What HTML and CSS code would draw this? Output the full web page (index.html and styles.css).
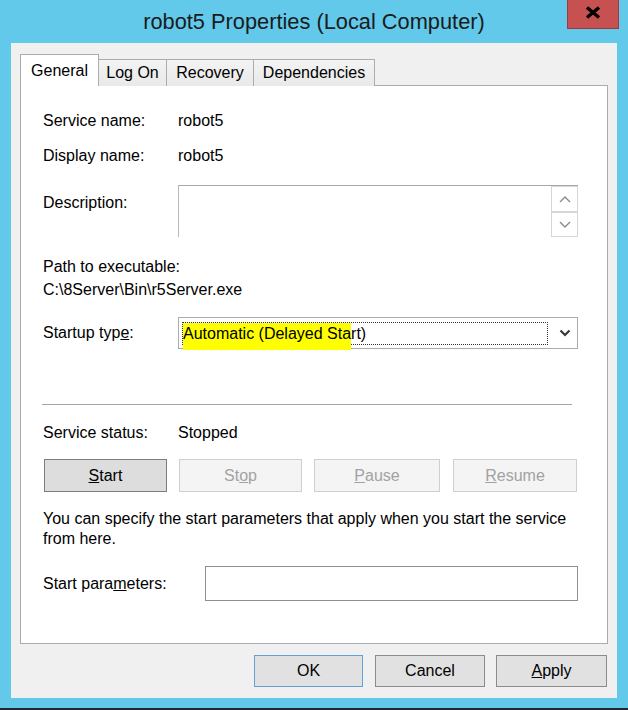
FILE: index.html
```html
<!DOCTYPE html>
<html lang="en">
<head>
  <meta charset="UTF-8" />
  <title>robot5 Properties (Local Computer)</title>
  <link rel="stylesheet" href="styles.css">
</head>
<body>
  <div class="window">
    <div class="titlebar">
      <h1 class="title">robot5 Properties (Local Computer)</h1>
      <button class="close" title="Close">
        <svg width="16" height="13" viewBox="0 0 16 13">
          <path d="M2 1.5 L14 11.5 M14 1.5 L2 11.5" stroke="#000" stroke-width="3.4" fill="none" />
        </svg>
      </button>
    </div>

    <div class="client">
      <div class="tabs">
        <div class="tab active tab-general">General</div>
        <div class="tab tab-logon">Log On</div>
        <div class="tab tab-recovery">Recovery</div>
        <div class="tab tab-deps">Dependencies</div>
      </div>

      <div class="panel">
        <div class="row">
          <span class="label">Service name:</span>
          <span>robot5</span>
        </div>
        <div class="row row-display">
          <span class="label">Display name:</span>
          <span>robot5</span>
        </div>
        <div class="row row-desc">
          <span class="label">Description:</span>
          <div class="desc-box">
            <div class="spin">
              <div class="spin-btn spin-up">
                <svg width="12" height="7" viewBox="0 0 12 7"><path d="M1 6 L6 1 L11 6" stroke="#8a8a8a" stroke-width="1.4" fill="none" /></svg>
              </div>
              <div class="spin-btn spin-down">
                <svg width="12" height="7" viewBox="0 0 12 7"><path d="M1 1 L6 6 L11 1" stroke="#8a8a8a" stroke-width="1.4" fill="none" /></svg>
              </div>
            </div>
          </div>
        </div>
        <div class="row row-path">Path to executable:</div>
        <div class="row path-value">C:\8Server\Bin\r5Server.exe</div>
        <div class="row row-startup">
          <span class="label">Startup typ<u>e</u>:</span>
          <div class="combo">
            <div class="focus"><span class="mark">Automatic (Delayed Sta</span>rt)</div>
            <div class="combo-arrow">
              <svg width="12" height="8" viewBox="0 0 12 8"><path d="M1.5 1.5 L6 6 L10.5 1.5" stroke="#3a3a3a" stroke-width="2.2" fill="none" /></svg>
            </div>
          </div>
        </div>

        <div class="divider"></div>

        <div class="row row-status">
          <span class="label">Service status:</span>
          <span>Stopped</span>
        </div>
        <div class="controls">
          <button class="btn svc-btn btn-start"><u>S</u>tart</button>
          <button class="btn svc-btn btn-stop" disabled>St<u>o</u>p</button>
          <button class="btn svc-btn btn-pause" disabled><u>P</u>ause</button>
          <button class="btn svc-btn btn-resume" disabled><u>R</u>esume</button>
        </div>
        <p class="hint">You can specify the start parameters that apply when you start the service from here.</p>
        <div class="row row-params">
          <span class="label label-wide">Start para<u>m</u>eters:</span>
          <div class="text-input"></div>
        </div>
      </div>

      <div class="actions">
        <button class="btn btn-default btn-ok">OK</button>
        <button class="btn btn-cancel">Cancel</button>
        <button class="btn btn-apply"><u>A</u>pply</button>
      </div>
    </div>
    <div class="bottom-edge"></div>
  </div>
</body>
</html>
```

FILE: styles.css
```css
body {
  margin: 0;
  background-color: #62c9ea;
  font-family: "Liberation Sans", Arial, sans-serif;
  font-size: 16px;
  color: #000;
}
.window {
  height: 710px;
  display: flex;
  flex-direction: column;
}
.titlebar {
  height: 43px;
  flex: none;
  display: grid;
  grid-template-columns: 1fr auto 1fr;
}
.title {
  grid-column: 2;
  margin: 0;
  font-size: 21.8px;
  font-weight: normal;
  line-height: 43px;
  color: #1b1b1b;
  white-space: nowrap;
}
.close {
  grid-column: 3;
  justify-self: end;
  align-self: start;
  width: 52px;
  height: 29px;
  margin-right: 9px;
  padding: 0;
  background-color: #c75050;
  border: 1px solid #9c3c3c;
  border-top: none;
  display: flex;
  justify-content: center;
  align-items: center;
  padding-bottom: 3px;
}

.client {
  flex: none;
  height: 655px;
  margin: 0 11px;
  box-sizing: border-box;
  padding: 11px 9px 0 9px;
  background-color: #f0f0f0;
}
.bottom-edge {
  margin-top: auto;
  height: 2px;
  background-color: #1f2a30;
}

/* tabs */
.tabs {
  display: flex;
  align-items: flex-end;
  height: 32px;
  margin-bottom: -1px;
}
.tab {
  box-sizing: border-box;
  height: 27px;
  border: 1px solid #acacac;
  border-left: none;
  border-bottom: none;
  background: linear-gradient(#f3f3f3, #e9e9e9);
  text-align: center;
  line-height: 26px;
}
.tab.active {
  height: 32px;
  border-left: 1px solid #acacac;
  background: #fff;
  line-height: 31px;
  position: relative;
  z-index: 1;
}
.tab-general { width: 79px; }
.tab-logon { width: 68px; }
.tab-recovery { width: 87px; }
.tab-deps { width: 121px; }

.panel {
  box-sizing: border-box;
  height: 559px;
  border: 1px solid #acacac;
  background-color: #fff;
  padding: 25px 0 0 22px;
}
.row {
  display: flex;
  align-items: center;
  line-height: 20px;
}
.label {
  width: 135px;
  flex: none;
}
.label-wide { width: 162px; }
.row-display { margin-top: 15px; }
.row-desc {
  margin-top: 19px;
  align-items: flex-start;
}
.row-desc .label { padding-top: 8px; }
.desc-box {
  box-sizing: border-box;
  width: 400px;
  height: 52px;
  border-top: 1px solid #a9a9a9;
  border-left: 1px solid #b9b9b9;
  display: flex;
  justify-content: flex-end;
}
.spin {
  width: 27px;
  display: flex;
  flex-direction: column;
}
.spin-btn {
  box-sizing: border-box;
  border: 1px solid #d6d6d6;
  display: flex;
  justify-content: center;
  align-items: center;
}
.spin-up { height: 26px; }
.spin-down { height: 25px; }

.row-path { margin-top: 20px; }
.path-value { margin-top: 3px; }
.row-startup { margin-top: 17px; }
.combo {
  box-sizing: border-box;
  width: 400px;
  height: 32px;
  border: 1px solid #acacac;
  padding-left: 3px;
  display: flex;
  align-items: center;
}
.focus {
  box-sizing: border-box;
  width: 366px;
  height: 23px;
  border: 1px dotted #333;
  line-height: 21px;
  white-space: nowrap;
}
.mark {
  background-color: #ffff00;
  padding: 2px 0 8px;
}
.combo-arrow {
  flex: 1;
  display: flex;
  justify-content: center;
  padding-left: 4px;
}

.divider {
  margin: 55px 0 0 -1px;
  width: 530px;
  height: 1px;
  background-color: #a6a6a6;
}
.row-status { margin-top: 18px; }

.btn {
  box-sizing: border-box;
  height: 32px;
  padding: 0;
  font: inherit;
  color: #000;
  background-color: #e1e1e1;
  border: 1px solid #adadad;
}
.controls {
  display: flex;
  margin: 16px 0 0 1px;
  gap: 12px;
}
.svc-btn { height: 33px; }
.btn-start {
  width: 123px;
  background-color: #dddddd;
  border-color: #7d7d7d;
}
.btn-stop { width: 123px; }
.btn-pause { width: 126px; }
.btn-resume { width: 124px; margin-left: 1px; }
.btn:disabled {
  background-color: #f4f4f4;
  border-color: #cfcfcf;
  color: #a2a2a2;
}
.hint {
  margin: 17px 0 0;
  width: 530px;
  line-height: 20px;
}
.row-params { margin-top: 17px; }
.text-input {
  box-sizing: border-box;
  width: 373px;
  height: 35px;
  border: 1px solid #8f8f8f;
  background-color: #fff;
}

.actions {
  display: flex;
  justify-content: flex-end;
  margin: 11px 1px 0 0;
}
.btn-ok { width: 109px; border-color: #5ea2dc; }
.btn-cancel { width: 110px; margin-left: 12px; border-color: #8c8c8c; }
.btn-apply { width: 111px; margin-left: 11px; border-color: #8c8c8c; }
```
